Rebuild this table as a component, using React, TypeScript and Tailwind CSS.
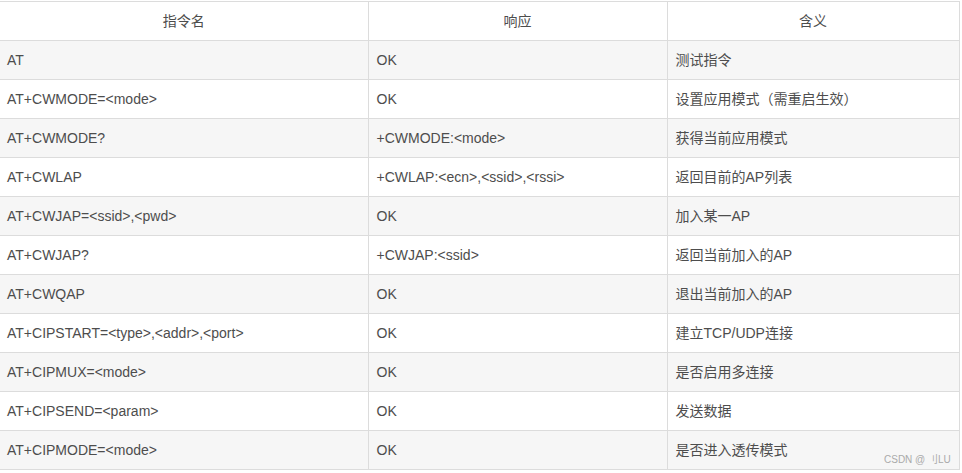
const rows: [string, string, string][] = [
  ["AT", "OK", "测试指令"],
  ["AT+CWMODE=<mode>", "OK", "设置应用模式（需重启生效）"],
  ["AT+CWMODE?", "+CWMODE:<mode>", "获得当前应用模式"],
  ["AT+CWLAP", "+CWLAP:<ecn>,<ssid>,<rssi>", "返回目前的AP列表"],
  ["AT+CWJAP=<ssid>,<pwd>", "OK", "加入某一AP"],
  ["AT+CWJAP?", "+CWJAP:<ssid>", "返回当前加入的AP"],
  ["AT+CWQAP", "OK", "退出当前加入的AP"],
  ["AT+CIPSTART=<type>,<addr>,<port>", "OK", "建立TCP/UDP连接"],
  ["AT+CIPMUX=<mode>", "OK", "是否启用多连接"],
  ["AT+CIPSEND=<param>", "OK", "发送数据"],
  ["AT+CIPMODE=<mode>", "OK", "是否进入透传模式"],
];

export default function App() {
  return (
    <div
      className="relative h-[473px] w-[962px] overflow-hidden bg-white pt-px text-[14px] text-[#4d4d4d]"
      style={{ fontFamily: '"Liberation Sans", Arial, "Noto Sans CJK SC", sans-serif' }}
    >
      <table className="w-[959px] table-fixed border-collapse">
        <colgroup>
          <col className="w-[368px]" />
          <col className="w-[299px]" />
          <col className="w-[292px]" />
        </colgroup>
        <thead>
          <tr className="h-[39px] bg-white">
            <th className="border-y border-[#dcdcdc] px-2 text-center font-normal">指令名</th>
            <th className="border border-[#dcdcdc] px-2 text-center font-normal">响应</th>
            <th className="border border-[#dcdcdc] px-2 text-center font-normal">含义</th>
          </tr>
        </thead>
        <tbody>
          {rows.map((r, i) => (
            <tr key={i} className={`h-[39px] ${i % 2 === 0 ? "bg-[#f6f6f6]" : "bg-white"}`}>
              <td className="border-y border-[#dcdcdc] pl-[7px] pr-2 whitespace-nowrap">{r[0]}</td>
              <td className="border border-[#dcdcdc] px-2 whitespace-nowrap">{r[1]}</td>
              <td className="border border-[#dcdcdc] px-2 whitespace-nowrap">{r[2]}</td>
            </tr>
          ))}
        </tbody>
      </table>
      <div className="absolute left-[884px] top-[452px] text-[10px] text-[#aaaaaa]">
        CSDN @ 刂LU
      </div>
    </div>
  );
}
